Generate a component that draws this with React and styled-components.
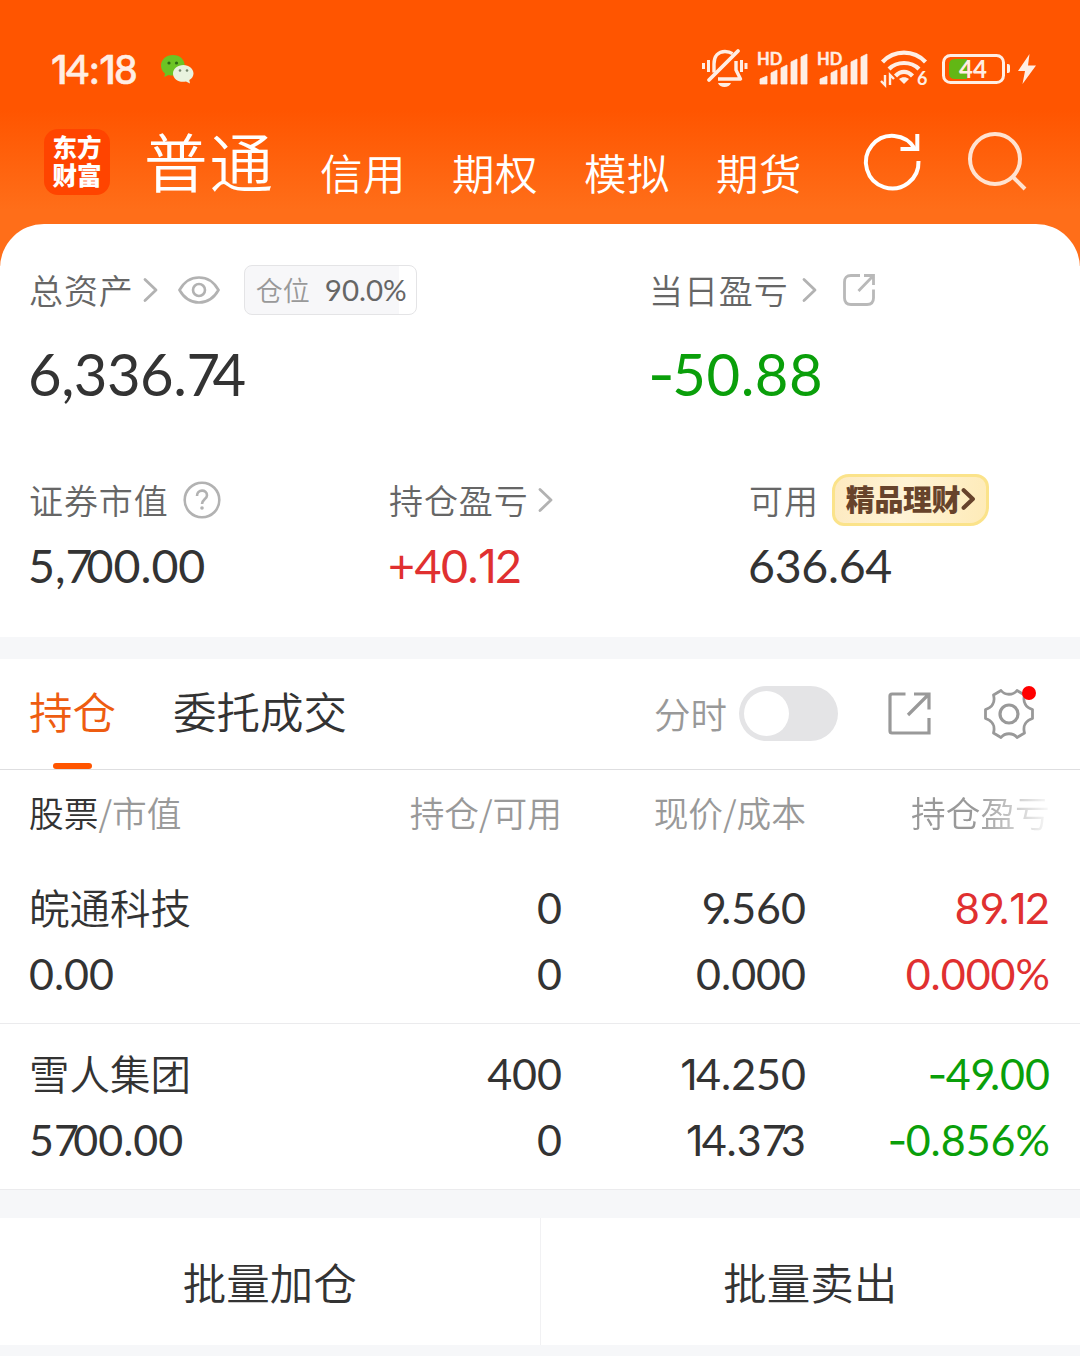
import React, { useState } from "react";
import styled, { createGlobalStyle } from "styled-components";

const GlobalStyle = createGlobalStyle`
  * {
    box-sizing: border-box;
  }
  body {
    margin: 0;
    background: #f6f7f9;
    color: #333;
    font-family: "Noto Sans CJK SC", sans-serif;
    font-weight: 350;
  }
  svg {
    display: block;
    flex: none;
    overflow: visible;
  }
`;

const Page = styled.div`
  width: 1080px;
  height: 1356px;
  overflow: hidden;
`;

const Top = styled.header`
  height: 266px;
  margin-bottom: -42px;
  background: linear-gradient(#ff5500 0, #ff5500 110px, #ff6e19 210px, #ff6e19 100%);
`;

const StatusBar = styled.div`
  display: flex;
  align-items: center;
  height: 104px;
  padding: 34px 44px 0 51px;
  color: #ffeee4;
`;

const Clock = styled.div`
  width: 110px;
  font-family: Lato, sans-serif;
  font-size: 40px;
  font-weight: 500;
  line-height: 68px;
  white-space: nowrap;
  -webkit-text-stroke: 0.6px #ffeee4;
`;

const StatusIcons = styled.div`
  display: flex;
  align-items: center;
  margin-left: auto;
`;

const SvgText = styled.text`
  font-family: Lato, "Liberation Sans", sans-serif;
  font-size: ${(props) => props.$size}px;
  font-weight: 700;
  fill: #ffeee4;
`;

const Nav = styled.nav`
  display: flex;
  height: 120px;
  padding-left: 44px;
  color: #fff;
`;

const Logo = styled.div`
  width: 66px;
  height: 66px;
  margin: 25px 34px 0 0;
  padding-top: 4px;
  border-radius: 14px;
  background: #ff4400;
  font-size: 24.5px;
  font-weight: 900;
  line-height: 28px;
  text-align: center;
`;

const MainAccount = styled.div`
  width: 176px;
  font-size: 63.5px;
  line-height: 111px;
  letter-spacing: 2px;
`;

const Account = styled.div`
  width: 132px;
  font-size: 42.5px;
  line-height: 135px;
  letter-spacing: 0.5px;
`;

const NavIcons = styled.div`
  display: flex;
  gap: 46px;
  margin: 28px 0 0 16px;
`;

const Summary = styled.section`
  height: 413px;
  padding: 40px 30px 0 29px;
  border-radius: 44px 44px 0 0;
  background: #fff;
`;

const SummaryRow = styled.div`
  display: grid;
  grid-template-columns: ${(props) => props.$columns};
  margin-bottom: ${(props) => props.$gap || 0}px;
`;

const Label = styled.div`
  display: flex;
  align-items: center;
  height: 51px;
  color: #666;
  font-size: 34px;
  line-height: 50px;
  letter-spacing: 0.9px;
  svg {
    margin-left: ${(props) => props.$iconGap || 9}px;
  }
`;

const Amount = styled.div`
  margin-left: -1px;
  font-family: Lato, sans-serif;
  font-size: ${(props) => (props.$large ? 58 : 46.5)}px;
  font-weight: 400;
  line-height: ${(props) => (props.$large ? 118 : 81)}px;
  letter-spacing: ${(props) => props.$spacing || 0}px;
  color: ${(props) => props.$color || "#333"};
`;

const Position = styled.div`
  display: flex;
  justify-content: space-between;
  align-items: center;
  width: 173px;
  height: 50px;
  margin-left: 24px;
  padding: 0 9px 0 11px;
  border: 1px solid #e4e4e6;
  border-radius: 8px;
  background: linear-gradient(90deg, #f7f7f9 90%, #fff 90%);
  color: #999;
  font-size: 27px;
  letter-spacing: 0;
  span {
    color: #666;
    font-family: Lato, sans-serif;
    font-size: 29.5px;
    font-weight: 400;
  }
`;

const Promo = styled.div`
  display: flex;
  align-items: center;
  width: 157px;
  height: 52px;
  margin-left: 13px;
  padding: 0 0 3px 11px;
  border: 3px solid #fbe38a;
  border-radius: 17px 13px 19px 12px;
  background: linear-gradient(100deg, #fdeac0, #fff3d6 45%, #feebb8);
  color: #67432b;
  font-size: 29px;
  font-weight: 800;
  letter-spacing: -0.4px;
  svg {
    margin: 2px 0 0 2px;
  }
`;

const Gap = styled.div`
  height: ${(props) => props.$height}px;
  background: #f6f7f9;
`;

const Tabs = styled.div`
  display: flex;
  height: 111px;
  padding-left: 29px;
  border-bottom: 1px solid #dedee0;
  background: #fff;
`;

const Tab = styled.button`
  display: flex;
  flex-direction: column;
  align-items: center;
  margin: 0 57px 0 0;
  padding: 0;
  border: 0;
  background: none;
  color: ${(props) => (props.$active ? "#ee5c10" : "#333")};
  font: inherit;
  font-size: 43.5px;
  line-height: 104px;
  &::after {
    content: "";
    width: 39px;
    height: 6px;
    border-radius: 3px;
    background: ${(props) => (props.$active ? "#ff5500" : "none")};
  }
`;

const TabTools = styled.div`
  display: flex;
  align-items: center;
  height: 109px;
  margin: 0 46px 0 auto;
  color: #999;
  font-size: 36.5px;
`;

const Toggle = styled.button`
  width: 99px;
  height: 55px;
  margin: 0 50px 0 12px;
  padding: 5px;
  border: 0;
  border-radius: 28px;
  background: #e4e4e6;
  &::before {
    content: "";
    display: block;
    width: 45px;
    height: 45px;
    border-radius: 50%;
    background: #fff;
    transform: translateX(${(props) => (props.$on ? 44 : 0)}px);
  }
`;

const Settings = styled.div`
  position: relative;
  margin-left: 53px;
  &::after {
    content: "";
    position: absolute;
    top: -3px;
    right: -2px;
    width: 14px;
    height: 14px;
    border-radius: 50%;
    background: #ff0000;
  }
`;

const Holdings = styled.section`
  background: #fff;
`;

const Row = styled.div`
  display: grid;
  grid-template-columns: 291px 242px 244px 244px;
  padding: ${(props) => (props.$head ? "0 30px 0 29px" : "17px 30px 16px 29px")};
  border-bottom: ${(props) => (props.$head ? 0 : "1px solid #ebebed")};
`;

const HeadCell = styled.div`
  height: 88px;
  overflow: hidden;
  color: #999;
  font-size: 34.7px;
  line-height: 85px;
  text-align: right;
  white-space: nowrap;
  &:first-child {
    text-align: left;
  }
  &:last-child {
    padding-left: 105px;
    text-align: left;
    mask-image: linear-gradient(90deg, #000 170px, transparent 248px);
  }
  b {
    color: #333;
    font-weight: 350;
  }
`;

const Cell = styled.div`
  display: flex;
  flex-direction: column;
  align-items: ${(props) => (props.$left ? "flex-start" : "flex-end")};
  color: ${(props) => props.$color || "#333"};
  font-family: Lato, sans-serif;
  font-size: 43px;
  font-weight: 400;
  line-height: 66px;
`;

const StockName = styled.div`
  font-family: "Noto Sans CJK SC", sans-serif;
  font-size: 40.5px;
  font-weight: 350;
  line-height: 64px;
  height: 66px;
`;

const Tight = styled.span`
  letter-spacing: -0.13em;
`;

const Plain = styled.span`
  font-family: Inter, sans-serif;
  letter-spacing: -0.04em;
  line-height: 0;
`;

const Actions = styled.footer`
  display: flex;
  height: 127px;
  background: #fff;
`;

const Action = styled.button`
  flex: 1;
  padding: 0;
  border: 0;
  background: none;
  color: #333;
  font: inherit;
  font-size: 43.5px;
  line-height: 124px;
  &:first-child {
    border-right: 1px solid #f1f1f3;
  }
`;

const red = "#e03030";
const green = "#0a9f0a";

const stocks = [
  { name: "皖通科技", value: "0.00", held: "0", free: "0", price: "9.560", cost: "0.000", profit: "89.12", rate: "0.000%", color: red },
  { name: "雪人集团", value: "5700.00", held: "400", free: "0", price: "14.250", cost: "14.373", profit: "-49.00", rate: "-0.856%", color: green },
];

// Lato only has a wide "1" with a foot and a short hyphen, both come from Inter;
// 7 and a 9 before the point are set closer to what follows
const Figures = ({ children }) => (
  <div>
    {children.split(/([1-]|7|9(?=\.))/).map((part, i) => {
      if (part === "1" || part === "-") {
        return <Plain key={i}>{part}</Plain>;
      }
      return part === "7" || part === "9" ? <Tight key={i}>{part}</Tight> : part;
    })}
  </div>
);

const Chevron = ({ color = "#b2b2b2", width = 2.8, size = 24 }) => (
  <svg width={(size * 15) / 24} height={size} viewBox="0 0 15 24" fill="none" stroke={color} strokeWidth={width}>
    <path d="M2 1.500 13 12 2 22.500" strokeLinecap="round" strokeLinejoin="round" />
  </svg>
);

const WechatIcon = () => (
  <svg width="33" height="29" viewBox="0 0 33 29">
    <path d="M12 0C5 0 0 4.700 0 10.500c0 3.500 1.500 6 4 8l-.8 3.500 4.500-2c7 2 16-2 16-9.500C23.700 4.700 19 0 12 0Z" fill="#6cc424" />
    <path d="M22.500 10C16.500 10 12 13.800 12 18.500c0 5.500 6 9.500 13 8l4 2-.7-3.500c2.700-1.500 4.200-4 4.200-6.500C32.500 13.800 28 10 22.500 10Z" fill="#e9f3df" />
    <circle cx="8" cy="8" r="1.600" fill="#2d6b12" />
    <circle cx="15.500" cy="8" r="1.600" fill="#2d6b12" />
    <circle cx="19" cy="15.500" r="1.300" fill="#77886e" />
    <circle cx="26" cy="15.500" r="1.300" fill="#77886e" />
  </svg>
);

const MuteIcon = () => (
  <svg width="46" height="40" viewBox="0 0 46 40" fill="none" stroke="#ffeee4" strokeWidth="3">
    <path d="M1.500 14v6M6.500 11v12M39.500 11v12M44 14v6" />
    <path d="M12 23.500V15C12 7 16.500 2.500 23 2.500c3 0 5.500.8 7.500 2.200M34 12v9l4.500 9H16" strokeLinejoin="round" strokeWidth="3.400" />
    <path d="M36 2 7 31" strokeWidth="3.800" strokeLinecap="round" />
    <path d="M16 34h13c-1 2.500-3.500 4-6.500 4S17 36.500 16 34Z" fill="#ffeee4" stroke="none" />
  </svg>
);

const SignalIcon = () => (
  <svg width="60" height="40" viewBox="0 0 60 40" fill="#ffeee4">
    <SvgText x="-1" y="15.500" $size="16.500" stroke="#ffeee4" strokeWidth="0.400">HD</SvgText>
    <path d="M2 35v-5l7-3v8ZM13 35V24l6-3v14ZM23 35V19l6-3v19ZM33 35V13l6-3v25ZM43 35V8l6-3v30Z" stroke="#ffeee4" strokeWidth="0.800" strokeLinejoin="round" />
  </svg>
);

const WifiIcon = () => (
  <svg width="48" height="40" viewBox="0 0 48 40" fill="none" stroke="#ffeee4" strokeWidth="4.200">
    <path d="M1.500 13C13 .5 33 .5 44.500 13" />
    <path d="M8 20c8-8 22-8 30 0" />
    <path d="M14.500 27c5-5.500 12-5.500 17 0" />
    <path d="m23 35-5-5c3-2.500 7-2.500 10 0Z" fill="#ffeee4" stroke="none" />
    <path d="M4 26v10l-4-4M9 36V26l4 4" strokeWidth="2.400" />
    <SvgText x="36" y="36" $size="18" stroke="none">6</SvgText>
  </svg>
);

const BatteryIcon = () => (
  <svg width="70" height="30" viewBox="0 0 70 30">
    <path d="M13 5h12v20H13q-6 0-6-6v-8q0-6 6-6Z" fill="#62b715" />
    <rect x="1.500" y="1.500" width="60" height="27" rx="7" fill="none" stroke="#ffeee4" strokeWidth="3" />
    <path d="M65 10h1q2 0 2 2v5q0 2-2 2h-1Z" fill="#ffeee4" />
    <SvgText x="17" y="23.500" $size="24">44</SvgText>
  </svg>
);

const BoltIcon = () => (
  <svg width="18" height="30" viewBox="0 0 18 30" fill="#ffeee4">
    <path d="M11.500 0 0 17h7L4.500 30 18 11.500h-8Z" />
  </svg>
);

const RefreshIcon = () => (
  <svg width="58" height="58" viewBox="0 0 58 58" fill="none" stroke="#fff" strokeWidth="4">
    <path d="M54.500 29A26.300 26.300 0 1 1 51 17" />
    <path d="M53.300 2v15H36.500" />
  </svg>
);

const SearchIcon = () => (
  <svg width="60" height="60" viewBox="0 0 60 60" fill="none" stroke="#ffe2d0" strokeWidth="4">
    <circle cx="27" cy="27" r="25" />
    <path d="m44.500 44.500 12.500 12.500" />
  </svg>
);

const EyeIcon = () => (
  <svg width="42" height="28" viewBox="0 0 42 28" fill="none" stroke="#b2b2b2" strokeWidth="2.600">
    <path d="M1.500 14C6 6 13 1.500 21 1.500S36 6 40.500 14C36 22 29 26.500 21 26.500S6 22 1.500 14Z" />
    <circle cx="21" cy="14" r="6" />
  </svg>
);

const ShareIcon = () => (
  <svg width="32" height="32" viewBox="0 0 32 32" fill="none" stroke="#b9b9b9" strokeWidth="2.800">
    <path d="M17 1.500H8Q1.500 1.500 1.500 8v16q0 6.500 6.500 6.500h16q6.500 0 6.500-6.500v-8.500" />
    <path d="M21 1.500h9.500V11M30 2 15.500 17" />
  </svg>
);

const HelpIcon = () => (
  <svg width="38" height="38" viewBox="0 0 38 38" fill="none" stroke="#b2b2b2" strokeWidth="2.600">
    <circle cx="19" cy="19" r="17.300" />
    <path d="M14 15c0-7 10-7 10-.8 0 4-5 4.300-5 8.800" />
    <circle cx="19" cy="27" r="1.800" fill="#b2b2b2" stroke="none" />
  </svg>
);

const ExportIcon = () => (
  <svg width="43" height="43" viewBox="0 0 43 43" fill="none" stroke="#999" strokeWidth="3.200">
    <path d="M17.500 2H4Q2 2 2 4v35q0 2 2 2h37V26" />
    <path d="M26 2h15v15.500M40 3 20 23" />
  </svg>
);

const GearIcon = () => (
  <svg width="50" height="50" viewBox="0 0 50 50" fill="none" stroke="#999" strokeWidth="2.800" strokeLinejoin="round">
    <path d="M17 1.500c4 5 12 5 16 0l7.500 4.500c-2 7.500 1.500 12.500 8 14.500v9c-6.500 2-10 7-8 14.500L33 48.500c-4-5-12-5-16 0L9.500 44c2-7.500-1.500-12.500-8-14.500v-9c6.500-2 10-7 8-14.500Z" />
    <circle cx="25" cy="25" r="9" strokeWidth="3.200" />
  </svg>
);

export default function App() {
  const [minute, setMinute] = useState(false);

  return (
    <Page>
      <GlobalStyle />
      <Top>
        <StatusBar>
          <Clock>
            <Figures>14:18</Figures>
          </Clock>
          <WechatIcon />
          <StatusIcons>
            <MuteIcon />
            <svg width="10" height="1" />
            <SignalIcon />
            <SignalIcon />
            <svg width="3" height="1" />
            <WifiIcon />
            <svg width="13" height="1" />
            <BatteryIcon />
            <svg width="6" height="1" />
            <BoltIcon />
          </StatusIcons>
        </StatusBar>
        <Nav>
          <Logo>
            东方
            <br />
            财富
          </Logo>
          <MainAccount>普通</MainAccount>
          {["信用", "期权", "模拟", "期货"].map((name) => (
            <Account key={name}>{name}</Account>
          ))}
          <NavIcons>
            <RefreshIcon />
            <SearchIcon />
          </NavIcons>
        </Nav>
      </Top>

      <Summary>
        <SummaryRow $columns="620px 1fr" $gap={41}>
          <div>
            <Label>
              总资产
              <Chevron />
              <svg width="2" height="1" />
              <EyeIcon />
              <Position>
                仓位 <span>90.0%</span>
              </Position>
            </Label>
            <Amount $large $spacing={-0.5}>
              <Figures>6,336.74</Figures>
            </Amount>
          </div>
          <div>
            <Label $iconGap={13}>
              当日盈亏
              <Chevron />
              <svg width="0" height="1" />
              <ShareIcon />
            </Label>
            <Amount $large $spacing={0.5} $color={green}>
              <Figures>-50.88</Figures>
            </Amount>
          </div>
        </SummaryRow>
        <SummaryRow $columns="360px 360px 1fr">
          <div>
            <Label $iconGap={14}>
              证券市值
              <HelpIcon />
            </Label>
            <Amount>
              <Figures>5,700.00</Figures>
            </Amount>
          </div>
          <div>
            <Label>
              持仓盈亏
              <Chevron />
            </Label>
            <Amount $spacing={-0.5} $color={red}>
              <Figures>+40.12</Figures>
            </Amount>
          </div>
          <div>
            <Label>
              可用
              <Promo>
                精品理财
                <Chevron color="#67432b" width={5} size={20} />
              </Promo>
            </Label>
            <Amount $spacing={-0.3}>
              <Figures>636.64</Figures>
            </Amount>
          </div>
        </SummaryRow>
      </Summary>

      <Gap $height={22} />
      <Tabs>
        <Tab $active>持仓</Tab>
        <Tab>委托成交</Tab>
        <TabTools>
          分时
          <Toggle $on={minute} onClick={() => setMinute(!minute)} />
          <ExportIcon />
          <Settings>
            <GearIcon />
          </Settings>
        </TabTools>
      </Tabs>

      <Holdings>
        <Row $head>
          <HeadCell>
            <b>股票</b>/市值
          </HeadCell>
          <HeadCell>持仓/可用</HeadCell>
          <HeadCell>现价/成本</HeadCell>
          <HeadCell>持仓盈亏</HeadCell>
        </Row>
        {stocks.map((stock) => (
          <Row key={stock.name}>
            <Cell $left>
              <StockName>{stock.name}</StockName>
              <Figures>{stock.value}</Figures>
            </Cell>
            <Cell>
              <Figures>{stock.held}</Figures>
              <Figures>{stock.free}</Figures>
            </Cell>
            <Cell>
              <Figures>{stock.price}</Figures>
              <Figures>{stock.cost}</Figures>
            </Cell>
            <Cell $color={stock.color}>
              <Figures>{stock.profit}</Figures>
              <Figures>{stock.rate}</Figures>
            </Cell>
          </Row>
        ))}
      </Holdings>

      <Gap $height={28} />
      <Actions>
        <Action>批量加仓</Action>
        <Action>批量卖出</Action>
      </Actions>
    </Page>
  );
}
